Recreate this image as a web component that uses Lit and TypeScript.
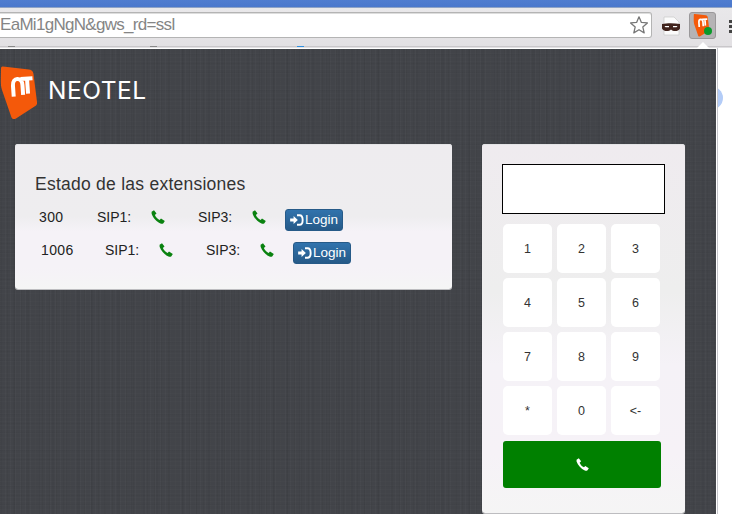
import { LitElement, html, css } from "lit";
import { customElement } from "lit/decorators.js";

const phone = (cls: string) => html`<svg class=${cls} viewBox="0 0 14 14" aria-hidden="true"><path d="M.6 1.8 L3 .2 L5.5 3.6 L3.9 5 C4.7 7 6.4 8.9 8.6 10 L10 8.5 L13.8 11 L12.4 13.3 C11.5 14 10.5 14 9.5 13.5 C5.5 11.8 2 8 .6 3.8 Z" fill="currentColor"/></svg>`;

const loginIcon = html`<svg class="li" viewBox="0 0 16 14" aria-hidden="true"><path d="M0 5.2 H4 V2.4 L9 7 L4 11.6 V8.8 H0 Z" fill="#fff"/><path d="M8 1.4 H11 C13.6 1.4 14.6 3.4 14.6 7 C14.6 10.6 13.6 12.6 11 12.6 H8" fill="none" stroke="#fff" stroke-width="2.2"/></svg>`;

const logoMark = (w: number, h: number) => html`<svg width=${w} height=${h} viewBox="0 0 38 56" aria-hidden="true"><path d="M3 2.5 L29 5.5 C32 6 33 7.5 33.5 10 L37 38 C37.3 40.5 36.5 41.5 34.5 42.5 L16 54.5 C14 55.6 12.5 55.2 11.5 53.5 L2 26 C1 23 .8 20 .8 16 L1 5 C1.1 3 1.5 2.3 3 2.5 Z" fill="#f4590a"/><g transform="rotate(-4 22 22)"><path d="M13 32 V21 C13 12.5 22.5 12.5 22.5 21 V31 M21 15 H33 M27.5 15 V30" fill="none" stroke="#fff" stroke-width="4"/></g></svg>`;

@customElement("app-root")
export class AppRoot extends LitElement {
  static styles = css`
    :host { display: block; width: 732px; height: 514px; overflow: hidden; font-family: "Liberation Sans", Arial, sans-serif; background: #fff; }
    .browser { display: flex; flex-direction: column; height: 514px; }
    .titlebar { height: 8px; flex: none; background: linear-gradient(#4f7dd0, #4a78cc); border-bottom: 1px solid #8fa4c6; box-sizing: border-box; }
    .toolbar { height: 40px; flex: none; box-sizing: border-box; padding-top: 4px; background: linear-gradient(#e9e8ea, #e2e0e3); display: flex; align-items: flex-start; position: relative; overflow: hidden; }
    .omni { width: 652px; height: 26px; box-sizing: border-box; flex: none; background: #fff; border: 1px solid #b4b4b4; border-left: 0; border-radius: 0 3px 3px 0; display: flex; align-items: center; justify-content: space-between; padding-right: 2px; box-shadow: inset 0 1px 0 #ddd; }
    .url { font: 17px "Liberation Sans", Arial, sans-serif; color: #858585; letter-spacing: -.7px; }
    .star { width: 20px; height: 20px; display: block; }
    .mask { width: 20px; height: 20px; margin: 4px 0 0 9px; display: block; flex: none; }
    .ext { width: 27px; height: 27px; box-sizing: border-box; margin-left: 8px; flex: none; background: #b5b3b5; border: 1px solid #9a989a; border-radius: 3px; position: relative; display: flex; align-items: center; justify-content: center; padding: 0 3px 2px 0; }
    .dot { position: absolute; right: 3px; bottom: 3px; width: 8px; height: 8px; background: #0a9a2a; border-radius: 50%; }
    .menu { display: grid; grid-template-columns: 4px; gap: 2px; margin: 8px 0 0 13px; flex: none; }
    .menu i { display: block; height: 3px; background: #444; }
    .marks { position: absolute; left: 0; right: 0; bottom: 1px; height: 1px; display: flex; background: #c9c7ca; }
    .marks i { height: 1px; width: 7px; margin-left: 8px; background: #888; }
    .marks i + i { margin-left: 135px; }
    .marks i.bl { margin-left: 140px; background: #2f8fe0; }
    .caret { position: absolute; left: 697px; bottom: 0; width: 0; height: 0; border: 6.5px solid transparent; border-top: 0; border-bottom-color: #fff; }
    .page { flex: 1; display: flex; min-height: 0; overflow: hidden; }
    .popup { width: 717px; flex: none; box-sizing: border-box; border-top: 1px solid #fff; border-right: 1px solid #fff; display: flex; flex-direction: column;
      background-color: #424449;
      background-image:
        repeating-linear-gradient(90deg, rgba(255,255,255,.018) 0 1px, transparent 1px 5px),
        repeating-linear-gradient(90deg, rgba(0,0,0,.035) 0 1px, transparent 1px 7px),
        repeating-linear-gradient(90deg, rgba(0,0,0,.03) 0 2px, transparent 2px 13px),
        repeating-linear-gradient(0deg, rgba(255,255,255,.012) 0 1px, transparent 1px 4px),
        repeating-linear-gradient(0deg, rgba(0,0,0,.025) 0 1px, transparent 1px 9px); }
    .rule { width: 1px; flex: none; background: #c6c6cc; }
    .side { flex: 1; position: relative; overflow: hidden; }
    .side::after { content: ""; position: absolute; left: -21px; top: 38px; width: 26px; height: 24px; border-radius: 50%; background: #b3ccf7; }
    .brand { height: 95px; flex: none; display: flex; align-items: flex-start; padding-top: 15px; box-sizing: border-box; }
    .brand svg { display: block; flex: none; }
    .word { font: 400 24.5px "Inter", "Liberation Sans", sans-serif; color: #fff; letter-spacing: .5px; margin: 12px 0 0 10px; line-height: 28px; }
    .body { display: flex; align-items: flex-start; padding-left: 15px; flex: 1; min-height: 0; }
    .panel { border-radius: 3px; box-sizing: border-box; box-shadow: inset 0 1px 0 #e4e4e6, 0 1px 0 #bdbdc0; }
    .status { width: 437px; height: 145px; padding: 30px 0 0 20px; background: linear-gradient(#eeecef 0, #eeedef 50%, #f5f2f7 60%, #f5f2f7 85%, #f5f5f5 100%); }
    h2 { margin: 0 0 12px; font: 400 17.5px/20px "Liberation Sans", Arial, sans-serif; color: #333; letter-spacing: .25px; }
    .row { display: flex; align-items: center; height: 24px; color: #222; font-size: 14px; margin-bottom: 9px; }
    .row.a { padding-left: 4px; }
    .row.b { padding-left: 6px; }
    .row .n { width: 58px; letter-spacing: .35px; margin-top: -2px; }
    .row.b .n { width: 64px; }
    .lab { width: 54px; margin-top: -2px; }
    .sp { width: 47px; display: flex; }
    .sp.last { width: 33px; }
    .ph { width: 14px; height: 14px; color: #0a8210; display: block; margin-top: -3px; }
    .login { width: 58px; height: 22px; box-sizing: border-box; padding: 0; border: 1px solid #265a88; border-radius: 3px; background: linear-gradient(#3173ad, #265a88); color: #fff; font: 13.5px "Liberation Sans", Arial, sans-serif; display: flex; align-items: center; justify-content: center; margin-top: 3px; }
    .li { width: 14px; height: 12px; display: block; margin-right: 1px; }
    .dial { width: 203px; height: 369px; margin-left: 30px; padding: 20px 0 0 20px; flex: none; background: linear-gradient(#efebef 0, #eeeeee 40%, #f5f2f7 60%, #f6f2f7 84%, #f5f5f5 100%); }
    .screen { width: 163px; height: 50px; box-sizing: border-box; background: #fff; border: 1px solid #000; }
    .keys { display: grid; grid-template-columns: repeat(3, 49px); grid-auto-rows: 49px; gap: 5px; margin: 10px 0 0 1px; }
    .keys button { border: 0; border-radius: 5px; background: #fff; padding: 0; color: #333; font: 12.5px "Liberation Sans", Arial, sans-serif; }
    .call { display: flex; align-items: center; justify-content: center; width: 158px; height: 47px; margin: 6px 0 0 1px; padding: 0; border: 0; border-radius: 3px; background: #008000; color: #fff; }
    .call svg { width: 13px; height: 13px; display: block; }
  `;

  private row(cls: string, n: string) {
    return html`<div class="row ${cls}">
      <span class="n">${n}</span><span class="lab">SIP1:</span><span class="sp">${phone("ph")}</span>
      <span class="lab">SIP3:</span><span class="sp last">${phone("ph")}</span>
      <button class="login">${loginIcon}Login</button>
    </div>`;
  }

  render() {
    const keys = ["1","2","3","4","5","6","7","8","9","*","0","<-"];
    return html`<div class="browser">
      <div class="titlebar"></div>
      <div class="toolbar">
        <div class="omni"><span class="url">EaMi1gNgN&amp;gws_rd=ssl</span>
          <svg class="star" viewBox="0 0 20 20" aria-hidden="true"><path d="M10 1.8 L12.4 7.4 L18.4 7.9 L13.8 11.9 L15.2 17.9 L10 14.7 L4.8 17.9 L6.2 11.9 L1.6 7.9 L7.6 7.4 Z" fill="#fff" stroke="#777" stroke-width="1.3" stroke-linejoin="round"/></svg>
        </div>
        <svg class="mask" viewBox="0 0 20 20" aria-hidden="true"><path d="M3 1 H13 L18 6 V19 H3 Z" fill="#fbfbfb" stroke="#c8c8c8" stroke-width=".7"/><path d="M1 8 C6 7 13 7 19 8 L19 12.5 C17 16 12 15.5 10 13.5 C8 15.5 3 16 1 12.5 Z" fill="#40231c"/><path d="M3.5 10 H8 V11.3 H4.5 Z M12 10 H16.5 L15.5 11.3 H12 Z" fill="#fff"/></svg>
        <div class="ext">${logoMark(17, 24)}<span class="dot"></span></div>
        <div class="menu"><i></i><i></i><i></i></div>
        <div class="marks"><i></i><i></i><i class="bl"></i></div>
        <div class="caret"></div>
      </div>
      <div class="page">
        <div class="popup">
          <div class="brand">${logoMark(38, 56)}<span class="word">NEOTEL</span></div>
          <div class="body">
            <section class="panel status">
              <h2>Estado de las extensiones</h2>
              ${this.row("a", "300")}
              ${this.row("b", "1006")}
            </section>
            <section class="panel dial">
              <div class="screen"></div>
              <div class="keys">${keys.map((k) => html`<button>${k}</button>`)}</div>
              <button class="call">${phone("")}</button>
            </section>
          </div>
        </div>
        <div class="rule"></div>
        <div class="side"></div>
      </div>
    </div>`;
  }
}
